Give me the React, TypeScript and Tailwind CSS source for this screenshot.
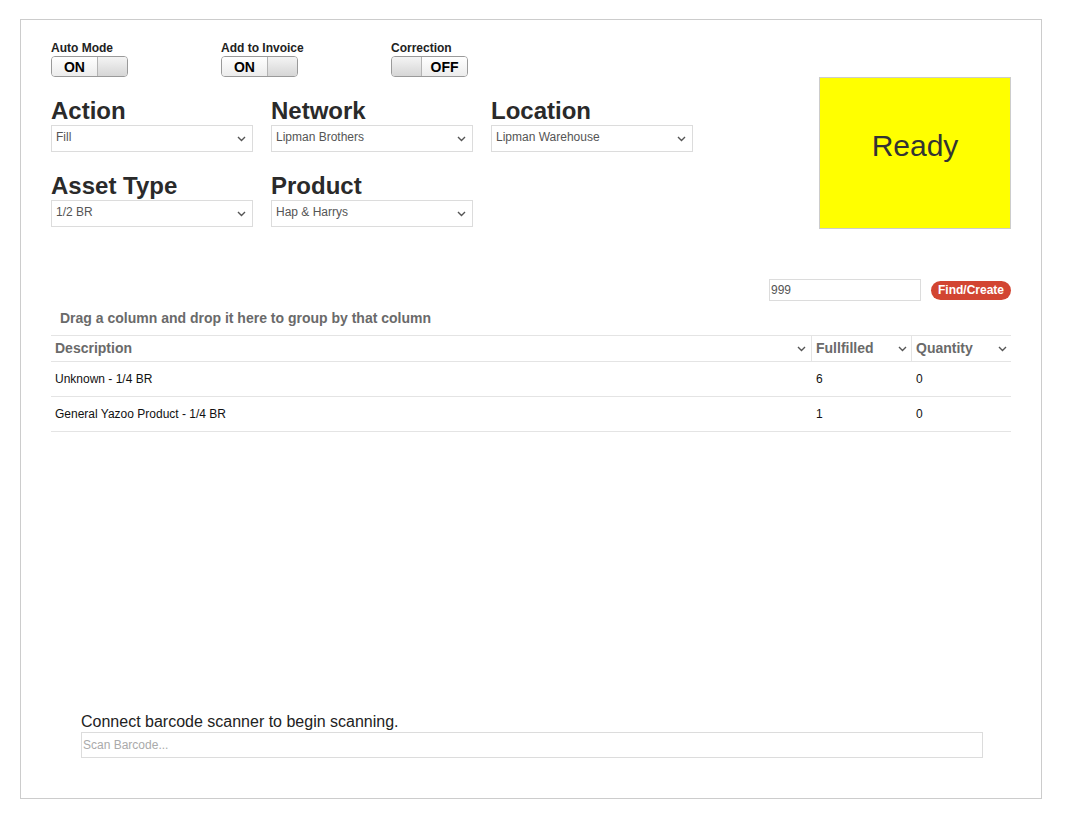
import React from "react";

const font = { fontFamily: '"Liberation Sans", Arial, Helvetica, sans-serif' };

const Chevron = () => (
  <svg width="9" height="6" viewBox="0 0 9 6" className="shrink-0">
    <polyline
      points="1,1 4.5,4.5 8,1"
      fill="none"
      stroke="#555"
      strokeWidth="1.4"
    />
  </svg>
);

interface ToggleProps {
  label: string;
  on: boolean;
}

const Toggle = ({ label, on }: ToggleProps) => {
  const text = (
    <div className="flex w-[46px] items-center justify-center bg-gradient-to-b from-white to-[#ececec] text-[14px] font-bold leading-none text-black">
      {on ? "ON" : "OFF"}
    </div>
  );
  const knob = (
    <div
      className={
        "w-[31px] bg-gradient-to-b from-[#f4f4f4] to-[#d6d6d6] " +
        (on ? "border-l border-[#b4b4b4]" : "border-r border-[#b4b4b4]")
      }
    />
  );
  return (
    <div className="w-[170px]">
      <div className="text-[12px] font-bold leading-[14px] text-[#222]">
        {label}
      </div>
      <div className="mt-px flex h-[21px] w-[77px] overflow-hidden rounded-[4px] border border-[#9a9a9a]">
        {on ? text : knob}
        {on ? knob : text}
      </div>
    </div>
  );
};

const Field = ({ label, value }: { label: string; value: string }) => (
  <div className="w-[202px]">
    <div className="text-[24px] font-bold leading-[28px] text-[#2a2a2a]">
      {label}
    </div>
    <div className="flex h-[27px] items-start justify-between border border-[#dcdcdc] bg-white pl-[4px] pr-[6px]">
      <span className="pt-[4px] text-[12px] leading-[14px] text-[#555]">
        {value}
      </span>
      <span className="pt-[10px]">
        <Chevron />
      </span>
    </div>
  </div>
);

const rows = [
  { desc: "Unknown - 1/4 BR", fulfilled: "6", qty: "0" },
  { desc: "General Yazoo Product - 1/4 BR", fulfilled: "1", qty: "0" },
];

export default function App() {
  return (
    <div className="bg-white pl-[20px] pt-[19px]" style={font}>
      <div className="flex h-[780px] w-[1022px] flex-col border border-[#cccccc] px-[30px] pt-[21px] pb-[40px]">
        <div className="flex justify-between">
          <div>
            <div className="flex">
              <Toggle label="Auto Mode" on={true} />
              <Toggle label="Add to Invoice" on={true} />
              <Toggle label="Correction" on={false} />
            </div>
            <div className="mt-[20px] grid grid-cols-[202px_202px_202px] gap-x-[18px] gap-y-[20px]">
              <Field label="Action" value="Fill" />
              <Field label="Network" value="Lipman Brothers" />
              <Field label="Location" value="Lipman Warehouse" />
              <Field label="Asset Type" value="1/2 BR" />
              <Field label="Product" value="Hap & Harrys" />
            </div>
          </div>
          <div className="mt-[36px] flex h-[152px] w-[192px] items-center justify-center border border-[#cccccc] bg-[#ffff00] pb-[16px] text-[30px] text-[#333]">
            Ready
          </div>
        </div>

        <div className="mt-[50px] flex items-center justify-end">
          <div className="flex h-[22px] w-[152px] items-center border border-[#dcdcdc] px-px text-[12px] text-[#555]">
            999
          </div>
          <button className="ml-[10px] h-[19px] w-[80px] rounded-full bg-[#d24532] text-[12px] font-bold leading-[19px] text-white">
            Find/Create
          </button>
        </div>

        <div className="pl-[9px] pt-[9px] pb-[9px] text-[14px] font-bold leading-[16px] text-[#6a6a6a]">
          Drag a column and drop it here to group by that column
        </div>

        <div className="flex-1">
          <div className="flex h-[27px] border-t border-b border-[#e4e4e4] text-[14px] font-bold text-[#6a6a6a]">
            <div className="flex flex-1 items-center justify-between pl-[4px] pr-[5px]">
              <span>Description</span>
              <Chevron />
            </div>
            <div className="flex w-[100px] items-center justify-between border-l border-[#e4e4e4] pl-[4px] pr-[4px]">
              <span>Fullfilled</span>
              <Chevron />
            </div>
            <div className="flex w-[100px] items-center justify-between border-l border-[#e4e4e4] pl-[4px] pr-[4px]">
              <span>Quantity</span>
              <Chevron />
            </div>
          </div>
          {rows.map((r) => (
            <div
              key={r.desc}
              className="flex h-[35px] items-center border-b border-[#e4e4e4] text-[12px] text-[#111]"
            >
              <div className="flex-1 pl-[4px]">{r.desc}</div>
              <div className="w-[100px] pl-[5px]">{r.fulfilled}</div>
              <div className="w-[100px] pl-[5px]">{r.qty}</div>
            </div>
          ))}
        </div>

        <div className="pl-[30px] pr-[28px]">
          <div className="text-[16px] leading-[18px] text-[#222]">
            Connect barcode scanner to begin scanning.
          </div>
          <div className="mt-px flex h-[26px] items-center border border-[#dcdcdc] px-px text-[12px] text-[#aaa]">
            Scan Barcode...
          </div>
        </div>
      </div>
    </div>
  );
}
